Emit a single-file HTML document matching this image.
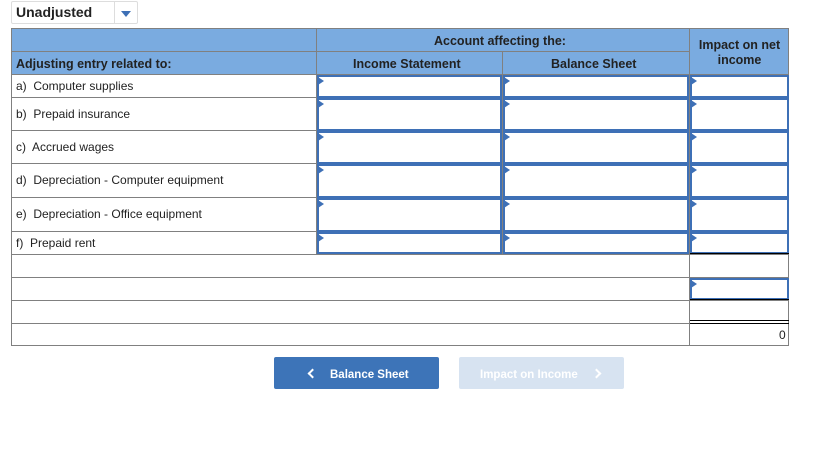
<!DOCTYPE html>
<html><head><meta charset="utf-8"><style>
*{margin:0;padding:0;box-sizing:border-box}
body{width:836px;height:454px;background:#fff;font-family:"Liberation Sans",Arial,sans-serif;position:relative;overflow:hidden;color:#222}
.a{position:absolute}
.h{background:#7aabe0}
.l{position:absolute;background:#808080}
.t{position:absolute;font-size:12px;white-space:nowrap}
.b{font-weight:bold;font-size:12.5px}
.in{position:absolute;border:2px solid #3e70b6;background:#fff}
.in:before{content:"";position:absolute;left:-1px;top:0;border-left:6px solid #3e70b6;border-top:4px solid transparent;border-bottom:4px solid transparent}
.chev{position:absolute;width:7px;height:7px;border-left:2px solid #fff;border-bottom:2px solid #fff}
</style></head><body>
<div class="a" style="left:11px;top:1px;width:127px;height:23px;border:1px solid #ddd;border-radius:2px"></div>
<div class="a" style="left:114px;top:1px;width:1px;height:23px;background:#ddd"></div>
<div class="t b" style="left:16px;top:4px;font-size:14px">Unadjusted</div>
<div class="a" style="left:121px;top:11px;border-left:5px solid transparent;border-right:5px solid transparent;border-top:6px solid #3e70b6"></div>

<div class="a h" style="left:11px;top:28px;width:778px;height:46px"></div>
<div class="l" style="left:11px;top:28px;width:778px;height:1px"></div>
<div class="l" style="left:11px;top:51px;width:678px;height:1px"></div>
<div class="l" style="left:11px;top:28px;width:1px;height:318px"></div>
<div class="l" style="left:788px;top:28px;width:1px;height:318px"></div>
<div class="l" style="left:316px;top:28px;width:1px;height:226px"></div>
<div class="l" style="left:502px;top:51px;width:1px;height:203px"></div>
<div class="l" style="left:689px;top:28px;width:1px;height:318px"></div>
<div class="t b" style="left:434px;top:34px">Account affecting the:</div>
<div class="t b" style="left:16px;top:57px">Adjusting entry related to:</div>
<div class="t b" style="left:353px;top:57px">Income Statement</div>
<div class="t b" style="left:551px;top:57px">Balance Sheet</div>
<div class="t b" style="left:690px;top:38px;width:99px;text-align:center;white-space:normal;line-height:15px">Impact on net income</div>

<div class="l" style="left:11px;top:74px;width:778px;height:1px"></div>
<div class="l" style="left:11px;top:97px;width:778px;height:1px"></div>
<div class="l" style="left:11px;top:130px;width:778px;height:1px"></div>
<div class="l" style="left:11px;top:163px;width:778px;height:1px"></div>
<div class="l" style="left:11px;top:197px;width:778px;height:1px"></div>
<div class="l" style="left:11px;top:231px;width:778px;height:1px"></div>
<div class="l" style="left:11px;top:254px;width:778px;height:1px"></div>
<div class="l" style="left:11px;top:277px;width:778px;height:1px"></div>
<div class="l" style="left:11px;top:300px;width:778px;height:1px"></div>
<div class="l" style="left:11px;top:323px;width:778px;height:1px"></div>
<div class="l" style="left:11px;top:345px;width:778px;height:1px"></div>

<div class="t" style="left:16px;top:79px">a)&nbsp; Computer supplies</div>
<div class="t" style="left:16px;top:107px">b)&nbsp; Prepaid insurance</div>
<div class="t" style="left:16px;top:140px">c)&nbsp; Accrued wages</div>
<div class="t" style="left:16px;top:173px">d)&nbsp; Depreciation - Computer equipment</div>
<div class="t" style="left:16px;top:207px">e)&nbsp; Depreciation - Office equipment</div>
<div class="t" style="left:16px;top:236px">f)&nbsp; Prepaid rent</div>

<div class="in" style="left:317px;top:75px;width:185px;height:23px"></div>
<div class="in" style="left:503px;top:75px;width:186px;height:23px"></div>
<div class="in" style="left:690px;top:75px;width:99px;height:23px"></div>
<div class="in" style="left:317px;top:98px;width:185px;height:33px"></div>
<div class="in" style="left:503px;top:98px;width:186px;height:33px"></div>
<div class="in" style="left:690px;top:98px;width:99px;height:33px"></div>
<div class="in" style="left:317px;top:131px;width:185px;height:33px"></div>
<div class="in" style="left:503px;top:131px;width:186px;height:33px"></div>
<div class="in" style="left:690px;top:131px;width:99px;height:33px"></div>
<div class="in" style="left:317px;top:164px;width:185px;height:34px"></div>
<div class="in" style="left:503px;top:164px;width:186px;height:34px"></div>
<div class="in" style="left:690px;top:164px;width:99px;height:34px"></div>
<div class="in" style="left:317px;top:198px;width:185px;height:34px"></div>
<div class="in" style="left:503px;top:198px;width:186px;height:34px"></div>
<div class="in" style="left:690px;top:198px;width:99px;height:34px"></div>
<div class="in" style="left:317px;top:232px;width:185px;height:22px"></div>
<div class="in" style="left:503px;top:232px;width:186px;height:22px"></div>
<div class="in" style="left:690px;top:232px;width:99px;height:22px"></div>
<div class="a" style="left:690px;top:253px;width:99px;height:1px;background:#000"></div>
<div class="in" style="left:690px;top:278px;width:99px;height:22px"></div>
<div class="a" style="left:690px;top:299px;width:99px;height:1px;background:#000"></div>
<div class="a" style="left:690px;top:320px;width:99px;height:1px;background:#000"></div>
<div class="a" style="left:690px;top:323px;width:99px;height:1px;background:#000"></div>
<div class="t" style="left:779px;top:328px;font-size:12px">0</div>

<div class="a" style="left:274px;top:357px;width:165px;height:32px;background:#3d74b8;border-radius:2px"></div>
<div class="chev" style="left:309px;top:370px;transform:rotate(45deg)"></div>
<div class="t" style="left:330px;top:369px;color:#fff;font-weight:bold;font-size:11.5px">Balance Sheet</div>
<div class="a" style="left:459px;top:357px;width:165px;height:32px;background:#d7e3f1;border-radius:2px"></div>
<div class="t" style="left:480px;top:369px;color:#fff;font-weight:bold;font-size:11.5px">Impact on Income</div>
<div class="chev" style="left:593px;top:370px;transform:rotate(-135deg)"></div>
</body></html>
